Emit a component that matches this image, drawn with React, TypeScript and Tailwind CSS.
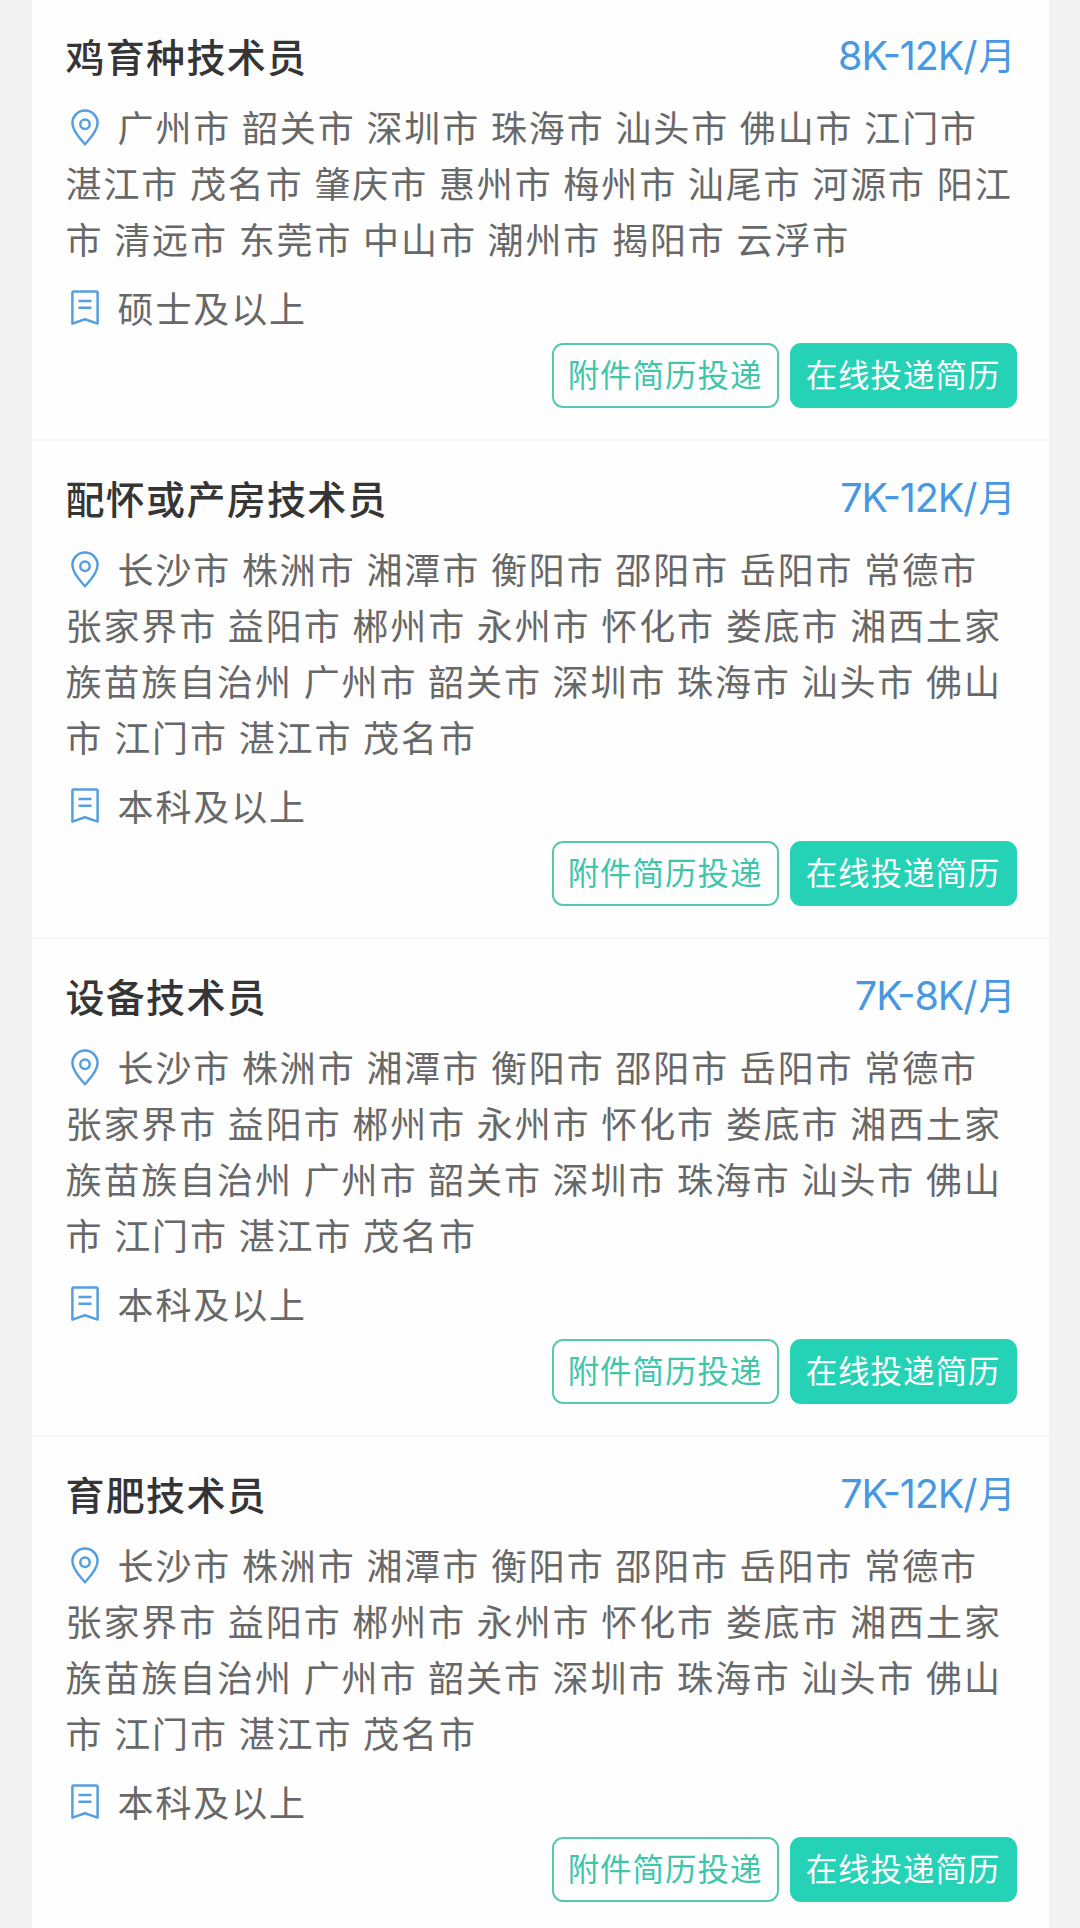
type Job = { title: string; salary: string; cities: string[]; degree: string };

const hunanCities = [
  "长沙市 株洲市 湘潭市 衡阳市 邵阳市 岳阳市 常德市",
  "张家界市 益阳市 郴州市 永州市 怀化市 娄底市 湘西土家",
  "族苗族自治州 广州市 韶关市 深圳市 珠海市 汕头市 佛山",
  "市 江门市 湛江市 茂名市",
];

const jobs: Job[] = [
  {
    title: "鸡育种技术员",
    salary: "8K-12K",
    cities: [
      "广州市 韶关市 深圳市 珠海市 汕头市 佛山市 江门市",
      "湛江市 茂名市 肇庆市 惠州市 梅州市 汕尾市 河源市 阳江",
      "市 清远市 东莞市 中山市 潮州市 揭阳市 云浮市",
    ],
    degree: "硕士及以上",
  },
  { title: "配怀或产房技术员", salary: "7K-12K", cities: hunanCities, degree: "本科及以上" },
  { title: "设备技术员", salary: "7K-8K", cities: hunanCities, degree: "本科及以上" },
  { title: "育肥技术员", salary: "7K-12K", cities: hunanCities, degree: "本科及以上" },
];

function PinIcon() {
  return (
    <svg className="mt-[3px] mr-[18.5px] ml-[5.5px] h-[37px] w-[28px] shrink-0" viewBox="0 0 28 37" fill="none" stroke="#559fe0" strokeWidth="2.5">
      <path d="M14 35.2C10.7 31.4 1.4 22.5 1.4 14a12.6 12.4 0 0 1 25.2 0C26.6 22.5 17.3 31.4 14 35.2Z" strokeLinejoin="round" />
      <circle cx="14" cy="15.2" r="4.7" />
    </svg>
  );
}

function DegreeIcon() {
  return (
    <svg className="mr-[18.5px] ml-[5.5px] h-[37px] w-[28px] shrink-0" viewBox="0 0 28 37" fill="none" stroke="#559fe0" strokeWidth="2.5" strokeLinejoin="round">
      <path d="M2.6 2.4h22.8a1.2 1.2 0 0 1 1.2 1.2V34.6L14 30.2 1.4 34.6V3.6A1.2 1.2 0 0 1 2.6 2.4Z" />
      <path d="M7.5 11.9h13M7.5 18.8h13" />
    </svg>
  );
}

function JobCard({ job }: { job: Job }) {
  return (
    <section className="border-b-2 border-[#f6f6f6] pt-[28px] pr-[32.5px] pb-[31px] pl-[33.5px]">
      <div className="flex h-[56px] items-center justify-between pr-[2px]">
        <h2 className="text-[39px] leading-[56px] font-medium tracking-[1.3px] text-[#353535]">{job.title}</h2>
        <p className="mt-[3px] font-[Inter,'Noto_Sans_CJK_SC',sans-serif] text-[39.5px] leading-[56px] tracking-[-1.05px] text-[#4797e1] [font-feature-settings:'case']">
          {job.salary}/<span className="ml-[2px] text-[37px]">月</span>
        </p>
      </div>
      <div className="mt-[15px] text-[36px] leading-[56px] tracking-[1.9px] whitespace-nowrap text-[#686868] [word-spacing:0.8px]">
        {job.cities.map((line, i) => (
          <div key={line} className="flex h-[56px] items-center">
            {i === 0 && <PinIcon />}
            <span>{line}</span>
          </div>
        ))}
        <div className="mt-[13px] flex h-[56px] items-center">
          <DegreeIcon />
          <span>{job.degree}</span>
        </div>
      </div>
      <div className="mt-[8px] flex justify-end gap-[11px] text-[31.5px] leading-none tracking-[0.95px]">
        <button className="flex h-[65px] w-[227px] items-center justify-center rounded-[11px] border-[2.5px] border-[#57c9b0] pb-[3px] text-[#3fc6aa]">
          附件简历投递
        </button>
        <button className="flex h-[65px] w-[227px] items-center justify-center rounded-[11px] bg-[#25d2b6] pb-[3px] text-white">
          在线投递简历
        </button>
      </div>
    </section>
  );
}

export default function App() {
  return (
    <div className="h-[1928px] overflow-hidden bg-[#f2f2f2] pr-[31px] pl-[32px] font-['Noto_Sans_CJK_SC',sans-serif]">
      <main className="-mt-px min-h-[1930px] bg-[#fefefe]">
        {jobs.map((job) => (
          <JobCard key={job.title} job={job} />
        ))}
      </main>
    </div>
  );
}
